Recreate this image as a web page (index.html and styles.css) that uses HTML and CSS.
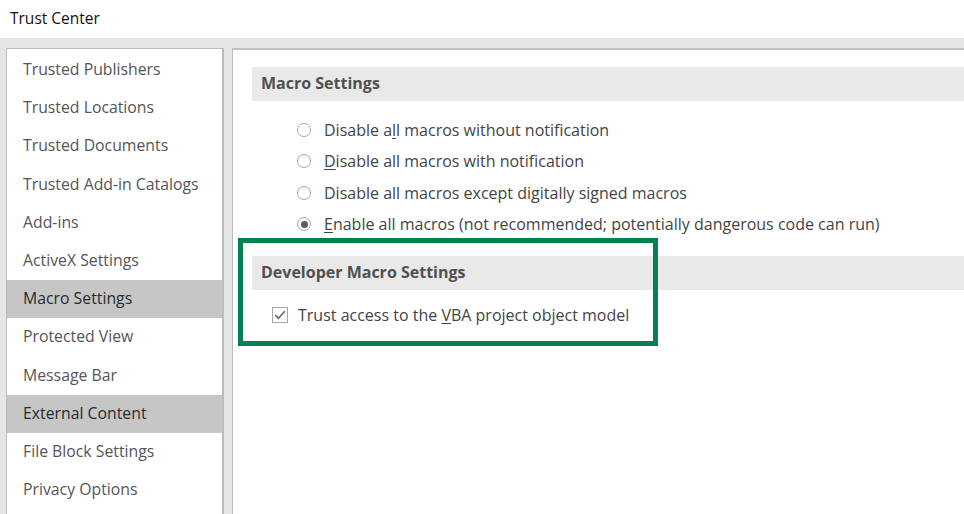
FILE: index.html
```html
<!DOCTYPE html>
<html>
<head>
<meta charset="utf-8">
<link rel="stylesheet" href="styles.css">
</head>
<body>
<div class="titlebar">Trust Center</div>
<div class="main">
  <ul class="nav">
    <li>Trusted Publishers</li>
    <li>Trusted Locations</li>
    <li>Trusted Documents</li>
    <li>Trusted Add-in Catalogs</li>
    <li>Add-ins</li>
    <li>ActiveX Settings</li>
    <li class="sel">Macro Settings</li>
    <li>Protected View</li>
    <li>Message Bar</li>
    <li class="sel">External Content</li>
    <li>File Block Settings</li>
    <li>Privacy Options</li>
  </ul>
  <div class="content">
    <div class="section-head">Macro Settings</div>
    <div class="radios">
      <div class="opt"><span class="radio"></span><span>Disable a<u>l</u>l macros without notification</span></div>
      <div class="opt"><span class="radio"></span><span><u>D</u>isable all macros with notification</span></div>
      <div class="opt"><span class="radio"></span><span>Disable all macros except di<u>g</u>itally signed macros</span></div>
      <div class="opt"><span class="radio on"></span><span><u>E</u>nable all macros (not recommended; potentially dangerous code can run)</span></div>
    </div>
    <div class="section-head dev">Developer Macro Settings</div>
    <div class="checks">
      <div class="opt"><span class="check"><svg width="14" height="14" viewBox="0 0 14 14"><path d="M2.3 7.2 L5.4 10.3 L11.8 3.2" fill="none" stroke="#6a6a6a" stroke-width="1.7"/></svg></span><span>Trust access to the <u>V</u>BA project object model</span></div>
    </div>
    <div class="highlight"></div>
  </div>
</div>
</body>
</html>
```
FILE: styles.css
```css
html, body {
  margin: 0;
  padding: 0;
  height: 100%;
  overflow: hidden;
}
body {
  background: #e6e6e6;
  font-family: "Open Sans", "Noto Sans", sans-serif;
  color: #444;
}
.titlebar {
  height: 38px;
  background: #fff;
  box-sizing: border-box;
  padding: 7px 0 0 10px;
  font-size: 15.5px;
  color: #111;
}
.main {
  display: flex;
  padding: 10px 0 0 6px;
  gap: 8px;
  height: 476px;
  box-sizing: border-box;
}
.nav {
  list-style: none;
  margin: 0;
  padding: 2px 0 0 0;
  width: 215px;
  background: #fff;
  border: 1px solid #bcbcbc;
  border-right-width: 2px;
  border-bottom: none;
}
.nav li {
  height: 38.2px;
  line-height: 37px;
  padding-left: 16px;
  font-size: 15.8px;
  color: #555;
  white-space: nowrap;
}
.nav li.sel {
  background: #c6c6c6;
  color: #2a2a2a;
}
.content {
  flex: 1;
  position: relative;
  background: #fff;
  border-left: 1px solid #bcbcbc;
  border-top: 2px solid #c2c2c2;
  padding: 17px 0 0 19px;
}
.section-head {
  height: 34px;
  line-height: 33px;
  background: #e9e9e9;
  padding-left: 9px;
  font-weight: bold;
  font-size: 16px;
  color: #505050;
}
.radios {
  padding: 13px 0 0 45px;
}
.opt {
  display: flex;
  align-items: center;
  height: 31.5px;
  font-size: 16px;
  color: #444;
  white-space: nowrap;
}
.opt u {
  text-underline-offset: 2px;
}
.radio {
  width: 14px;
  height: 14px;
  box-sizing: border-box;
  border: 1px solid #a6a6a6;
  border-radius: 50%;
  margin-right: 13px;
  display: flex;
  align-items: center;
  justify-content: center;
  flex: none;
}
.radio.on::after {
  content: "";
  width: 7px;
  height: 7px;
  border-radius: 50%;
  background: #5a5a5a;
}
.dev {
  margin-top: 16px;
}
.checks {
  padding: 9px 0 0 20px;
}
.check {
  width: 16px;
  height: 16px;
  box-sizing: border-box;
  border: 1px solid #a8a8a8;
  margin-right: 10px;
  display: flex;
  align-items: center;
  justify-content: center;
  flex: none;
}
.highlight {
  position: absolute;
  left: 5px;
  top: 188px;
  width: 420px;
  height: 108px;
  box-sizing: border-box;
  border: 5px solid #00814f;
}
```
